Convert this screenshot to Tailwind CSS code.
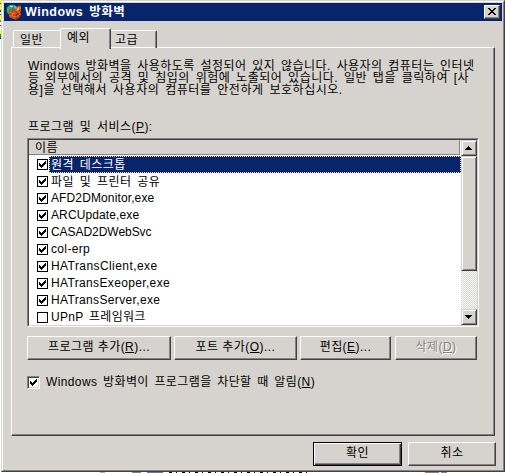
<!DOCTYPE html>
<html lang="ko">
<head>
<meta charset="utf-8">
<title>Windows 방화벽</title>
<script src="https://cdn.jsdelivr.net/npm/@tailwindcss/browser@4"></script>
</head>
<body class="w-[505px] h-[473px] overflow-hidden bg-white font-['Liberation_Sans','Noto_Sans_CJK_KR',sans-serif] text-[12px] leading-[13px] tracking-[0.45px] [word-spacing:2px] text-black">
<div class="flex h-[472px]">
  <!-- sliver of the window behind -->
  <div class="w-px shrink-0 flex flex-col">
    <div class="h-[3px] bg-[#ffff00]"></div><div class="h-px bg-[#424142]"></div><div class="h-[6px] bg-[#ffff00]"></div><div class="h-[2px] bg-[#424142]"></div><div class="h-[2px] bg-white"></div><div class="h-px bg-[#424142]"></div><div class="h-[5px] bg-[#ffff00]"></div><div class="h-[2px] bg-[#848284]"></div><div class="h-[3px] bg-white"></div><div class="h-px bg-[#424142]"></div><div class="h-[4px] bg-white"></div><div class="h-[4px] bg-[#ffff00]"></div><div class="h-[4px] bg-[#00b000]"></div><div class="h-px bg-black"></div>
  </div>
  <div class="w-[504px] h-[472px] border border-l-[#d6d3ce] border-t-[#d6d3ce] border-r-[#424142] border-b-[#424142] bg-[#d6d3ce]">
   <div class="h-[470px] border border-t-white border-l-white border-r-[#848284] border-b-[#848284] p-px">
    <header class="h-[18px] bg-[#08246b] flex items-center pl-[2px] pr-[2px]">
      <svg class="w-4 h-4 shrink-0" viewBox="0 0 16 16">
        <circle cx="6" cy="6" r="5.5" fill="#2180d8"/>
        <path d="M1 4L4 1L7 1L6 4L4 6L5 8L3 10L1 8Z" fill="#31b84a"/><path d="M8 1L11 3L10 5L8 4Z" fill="#59cf55"/><path d="M4 2h3v1H4z" fill="#a8f0f8"/>
        <path d="M3 6L6 5L10 6L15 3V12L10 16L3 13Z" fill="#c63c08"/>
        <path d="M10 7L15 4V12L10 16Z" fill="#9b2800"/>
        <path d="M3 8.5L10 10L15 6.5M3 11L10 13L15 9.5M5 6V9M8 7V9.5M6.500 9.500V12M5 11.500V14M8 12.500V15M12 6V9M13.500 8V10.500M12 11V14" fill="none" stroke="#efa56b" stroke-width=".5"/>
        <path d="M9 6L13 1L14 3L15 1V5L11 8Z" fill="#ef6118"/><path d="M11 5L13 3V5L11 7Z" fill="#ffca42"/>
      </svg>
      <h1 class="ml-[3px] text-white font-bold text-[12.500px] leading-[16px] tracking-[0.5px] whitespace-pre">Windows 방화벽</h1>
      <button class="ml-auto w-[16px] h-[14px] border border-t-white border-l-white border-r-[#424142] border-b-[#424142] bg-[#d6d3ce] shadow-[inset_-1px_-1px_#848284]">
        <svg class="block w-[14px] h-[12px]" viewBox="0 0 14 12" shape-rendering="crispEdges"><path d="M3 2h2v1h1v1h2v-1h1v-1h2v1h-1v1h-1v1h-1v1h1v1h1v1h1v1h-2v-1h-1v-1h-2v1h-1v1h-2v-1h1v-1h1v-1h1v-1h-1v-1h-1v-1h-1z" fill="#000"/></svg>
      </button>
    </header>
    <nav class="flex items-end h-[27px] pl-[9px] relative">
      <div class="w-[47px] h-[18px] border-l border-t border-white rounded-tl-[2px] pl-[6px] pt-[3px] whitespace-nowrap">일반</div>
      <div class="relative z-10 -mb-px w-[51px] h-[21px] bg-[#d6d3ce] border-l border-t border-l-white border-t-white border-r border-r-[#424142] rounded-t-[2px] shadow-[inset_-1px_0_#848284] pl-[6px] pt-[3px] whitespace-nowrap">예외</div>
      <div class="w-[46px] h-[18px] border-t border-t-white border-r border-r-[#424142] rounded-tr-[2px] shadow-[inset_-1px_0_#848284] pl-[4px] pt-[3px] whitespace-nowrap">고급</div>
    </nav>
    <section class="ml-[7px] w-[484px] h-[389px] border border-t-white border-l-white border-r-[#424142] border-b-[#424142] shadow-[inset_-1px_-1px_#848284] -mt-px pl-[15px] pt-[12px]">
      <div class="leading-[12px] whitespace-nowrap pl-px">
        <p>Windows 방화벽을 사용하도록 설정되어 있지 않습니다. 사용자의 컴퓨터는 인터넷</p>
        <p class="tracking-[0.5px]">등 외부에서의 공격 및 침입의 위험에 노출되어 있습니다. 일반 탭을 클릭하여 [사</p>
        <p class="tracking-[0.53px]">용]을 선택해서 사용자의 컴퓨터를 안전하게 보호하십시오.</p>
      </div>
      <p class="mt-[25px] pl-px whitespace-pre">프로그램 및 서비스(<u>P</u>):</p>
      <div class="mt-[4px] w-[452px] h-[189px] border border-t-[#848284] border-l-[#848284] border-r-white border-b-white">
       <div class="w-[450px] h-[187px] border border-t-[#424142] border-l-[#424142] border-r-[#d6d3ce] border-b-[#d6d3ce] bg-white flex overflow-hidden">
        <div class="w-[432px] shrink-0">
          <div class="h-[15px] w-[431px] bg-[#d6d3ce] border-b border-r border-[#848284] pl-[6px] pt-[2px] leading-[12px] whitespace-nowrap">이름</div>
          <ul id="list" class="mt-px pl-[8px]"></ul>
        </div>
        <div class="w-[16px] shrink-0 flex flex-col bg-[conic-gradient(#fff_25%,#d6d3ce_0_50%,#fff_0_75%,#d6d3ce_0)] bg-[length:2px_2px]">
          <div class="h-[16px] border border-t-[#d6d3ce] border-l-[#d6d3ce] border-r-[#424142] border-b-[#424142] bg-[#d6d3ce] shadow-[inset_1px_1px_#fff,inset_-1px_-1px_#848284]">
            <svg class="block w-[14px] h-[14px]" viewBox="0 0 14 14" shape-rendering="crispEdges"><path d="M6 5h1v1h1v1h1v1h1v1H3V8h1V7h1V6h1z"/></svg>
          </div>
          <div class="h-[115px] border border-t-[#d6d3ce] border-l-[#d6d3ce] border-r-[#424142] border-b-[#424142] bg-[#d6d3ce] shadow-[inset_1px_1px_#fff,inset_-1px_-1px_#848284]"></div>
          <div class="mt-auto h-[16px] border border-t-[#d6d3ce] border-l-[#d6d3ce] border-r-[#424142] border-b-[#424142] bg-[#d6d3ce] shadow-[inset_1px_1px_#fff,inset_-1px_-1px_#848284]">
            <svg class="block w-[14px] h-[14px]" viewBox="0 0 14 14" shape-rendering="crispEdges"><path d="M3 5h7v1H9v1H8v1H7v1H6V8H5V7H4V6H3z"/></svg>
          </div>
        </div>
       </div>
      </div>
      <div class="mt-[9px] flex text-center">
        <button class="w-[144px] h-[24px] whitespace-nowrap border border-t-white border-l-white border-r-[#424142] border-b-[#424142] shadow-[inset_-1px_-1px_#848284] pb-[2px]">프로그램 추가(<u>R</u>)...</button>
        <button class="ml-[3px] w-[123px] h-[24px] whitespace-nowrap border border-t-white border-l-white border-r-[#424142] border-b-[#424142] shadow-[inset_-1px_-1px_#848284] pb-[2px]">포트 추가(<u>O</u>)...</button>
        <button class="ml-[3px] w-[91px] h-[24px] whitespace-nowrap border border-t-white border-l-white border-r-[#424142] border-b-[#424142] shadow-[inset_-1px_-1px_#848284] pb-[2px]">편집(<u>E</u>)...</button>
        <button class="ml-[4px] w-[82px] h-[24px] whitespace-nowrap border border-t-white border-l-white border-r-[#424142] border-b-[#424142] shadow-[inset_-1px_-1px_#848284] pb-[2px] text-[#848284] [text-shadow:1px_1px_#fff]">삭제(<u>D</u>)</button>
      </div>
      <div class="mt-[16px] flex">
        <span class="w-[13px] h-[13px] bg-white border border-t-[#848284] border-l-[#848284] border-r-white border-b-white shadow-[inset_1px_1px_#424142,inset_-1px_-1px_#d6d3ce]"><svg class="block w-[11px] h-[11px]" viewBox="0 0 11 11" shape-rendering="crispEdges"><path d="M2 4h1v1h1v1h1V5h1V4h1V3h1V2h1v3H8v1H7v1H6v1H5v1H4V8H3V7H2z"/></svg></span>
        <span class="ml-[6px] whitespace-nowrap tracking-[0.38px]">Windows 방화벽이 프로그램을 차단할 때 알림(<u>N</u>)</span>
      </div>
    </section>
    <footer class="flex mt-[6px] pl-[309px] text-center">
      <button class="w-[89px] h-[24px] border border-black shadow-[inset_1px_1px_#fff,inset_-1px_-1px_#424142,inset_-2px_-2px_#848284] pb-[2px]">확인</button>
      <button class="ml-[6px] w-[88px] h-[24px] border border-t-white border-l-white border-r-[#424142] border-b-[#424142] shadow-[inset_-1px_-1px_#848284] pb-[2px]">취소</button>
    </footer>
   </div>
  </div>
</div>
<div class="flex h-px bg-white">
  <div class="ml-[100px] w-[5px] bg-[#b5b2b5]"></div><div class="ml-[27px] w-[9px] bg-[#848284]"></div><div class="ml-[6px] w-[16px] bg-[#6b7d94]"></div>
  <div class="ml-[6px] w-[138px] bg-[repeating-linear-gradient(90deg,#000_0_3px,#fff_3px_7px,#000_7px_8px,#fff_8px_13px)]"></div>
  <div class="ml-[118px] w-[14px] bg-[#848284]"></div><div class="ml-[2px] w-[6px] bg-[#848284]"></div>
</div>
<script>
const latin = 'pt-px tracking-[0.35px]', narrow = 'pt-px tracking-[0.12px]', hangul = 'pt-[2px]';
const rows = [['원격 데스크톱',1,hangul],['파일 및 프린터 공유',1,hangul],['AFD2DMonitor,exe',1,narrow],['ARCUpdate,exe',1,narrow],['CASAD2DWebSvc',1,'pt-px tracking-[-0.05px]'],['col-erp',1,latin],['HATransClient,exe',1,'pt-px tracking-[0.42px]'],['HATransExeoper,exe',1,latin],['HATransServer,exe',1,latin],['UPnP 프레임워크',0,'pt-px tracking-[0.3px]']];
document.getElementById('list').innerHTML = rows.map(([name, on, cls], i) => `
<li class="flex h-[17px]"><span class="mt-[3px] w-[11px] h-[11px] shrink-0 border border-black bg-white">${on ? '<svg class="block w-[9px] h-[9px]" viewBox="0 0 9 9" shape-rendering="crispEdges"><path d="M1 3h1v1h1v1h1V4h1V3h1V2h1V1h1v3H7v1H6v1H5v1H4v1H3V7H2V6H1z"/></svg>' : ''}</span><span class="ml-px flex-1 pl-px whitespace-pre border border-dotted ${cls} ${i === 0 ? 'bg-[#08246b] text-white border-[#f7db94]' : 'border-transparent'}">${name}</span></li>`).join('');
</script>
</body>
</html>
